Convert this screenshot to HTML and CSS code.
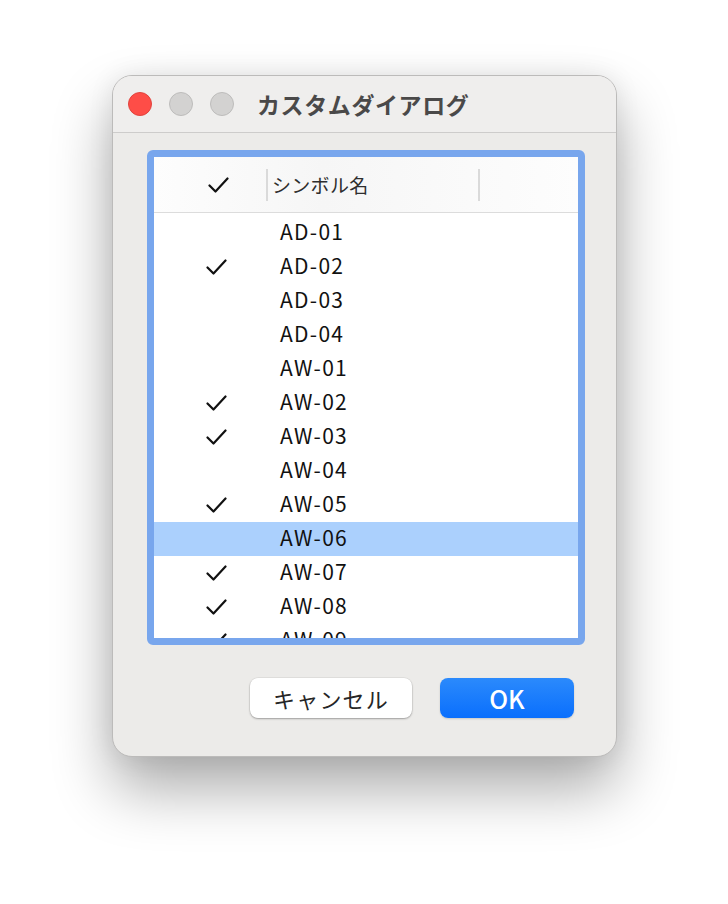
FILE: index.html
```html
<!DOCTYPE html>
<html lang="ja">
<head>
    <meta charset="UTF-8">
    <meta name="viewport" content="width=device-width, initial-scale=1.0">
    <title>カスタムダイアログ</title>
    <link rel="stylesheet" href="styles.css">
</head>
<body>
    <div class="window">
        <div class="titlebar">
            <div class="lights">
                <span class="light close"></span>
                <span class="light"></span>
                <span class="light"></span>
            </div>
            <div class="title">カスタムダイアログ</div>
        </div>
        <div class="content">
            <div class="table">
                <div class="table-inner">
                    <div class="table-header">
                        <div class="head-check">
                            <svg class="check" viewBox="0 0 21 16"><path d="M1.5 8.5 L7.5 14.5 L19.5 1.5"/></svg>
                        </div>
                        <div class="head-name">シンボル名</div>
                        <div class="head-rest"></div>
                    </div>
                    <div class="rows" id="rows"></div>
                </div>
            </div>
            <div class="buttons">
                <button class="btn cancel">キャンセル</button>
                <button class="btn ok">OK</button>
            </div>
        </div>
    </div>

    <script>
        // Symbol list: name and checked state
        const symbols = [
            ["AD-01", false], ["AD-02", true], ["AD-03", false], ["AD-04", false],
            ["AW-01", false], ["AW-02", true], ["AW-03", true], ["AW-04", false],
            ["AW-05", true], ["AW-06", false], ["AW-07", true], ["AW-08", true],
            ["AW-09", true]
        ];
        const selected = "AW-06";
        const checkSvg = '<svg class="check" viewBox="0 0 21 16"><path d="M1.5 8.5 L7.5 14.5 L19.5 1.5"/></svg>';

        const rows = document.getElementById("rows");
        symbols.forEach(function(item) {
            const row = document.createElement("div");
            row.className = "row" + (item[0] === selected ? " selected" : "");
            row.innerHTML = '<div class="cell-check">' + (item[1] ? checkSvg : '') + '</div>' +
                '<div class="cell-name">' + item[0] + '</div>';
            rows.appendChild(row);
        });
    </script>
</body>
</html>
```

FILE: styles.css
```css
body {
    margin: 0;
    height: 904px;
    background-color: #ffffff;
    font-family: "Noto Sans CJK JP", "Noto Sans", sans-serif;
    overflow: hidden;
}
.window {
    width: 503px;
    margin: 75px 0 0 112px;
    background-color: #ecebe9;
    border: 1px solid #bcbbba;
    border-radius: 20px;
    box-shadow: 0 32px 60px rgba(0, 0, 0, 0.33), 0 0 26px rgba(0, 0, 0, 0.08);
    overflow: hidden;
}
.titlebar {
    height: 56px;
    display: flex;
    align-items: center;
    background-color: #efeeed;
    border-bottom: 1px solid #cdcccb;
}
.lights {
    display: flex;
    gap: 17px;
    padding-left: 15px;
}
.light {
    width: 22px;
    height: 22px;
    border-radius: 50%;
    background-color: #d3d2d1;
    border: 0.5px solid #bdbcbb;
}
.light.close {
    background-color: #fe4d47;
    border-color: #e0443e;
}
.title {
    margin-left: 23px;
    font-size: 23px;
    font-weight: bold;
    color: #4a4949;
    letter-spacing: 0.6px;
}
.content {
    padding: 17px 31px 38px 34px;
}
.table {
    width: 424px;
    height: 481px;
    border: 7px solid #78a6ed;
    border-radius: 6px;
    background-color: #ffffff;
}
.table-inner {
    height: 100%;
    overflow: hidden;
}
.table-header {
    display: grid;
    grid-template-columns: 112px 212px 1fr;
    align-items: center;
    height: 55px;
    border-bottom: 1px solid #dcdcdc;
    background: linear-gradient(90deg, #fdfdfd, #f6f6f6 40%, #fdfdfd);
}
.head-check {
    padding-left: 54px;
    display: flex;
}
.head-name,
.head-rest {
    height: 32px;
    border-left: 2px solid #dadada;
    display: flex;
    align-items: center;
}
.head-name {
    padding-left: 4px;
    font-size: 19px;
    color: #2e2e2e;
    letter-spacing: 0.3px;
}
.rows {
    padding-top: 3px;
}
.row {
    display: grid;
    grid-template-columns: 126px 1fr;
    align-items: center;
    height: 34px;
}
.row.selected {
    background-color: #abd0fd;
}
.cell-check {
    padding-left: 52px;
    display: flex;
}
.cell-name {
    font-size: 21px;
    line-height: 28px;
    padding-bottom: 4px;
    color: #111111;
    letter-spacing: 1.3px;
}
.check {
    width: 21px;
    height: 16px;
    fill: none;
    stroke: #111111;
    stroke-width: 2.2;
    stroke-linecap: round;
    stroke-linejoin: round;
}
.buttons {
    display: flex;
    justify-content: flex-end;
    gap: 28px;
    margin-top: 33px;
    padding-right: 11px;
}
.btn {
    height: 40px;
    border-radius: 8px;
    border: none;
    font-family: "Noto Sans CJK JP", "Noto Sans", sans-serif;
    padding: 0;
}
.cancel {
    width: 162px;
    background-color: #ffffff;
    color: #262626;
    font-size: 22px;
    letter-spacing: 1.2px;
    box-shadow: 0 1px 2px rgba(0, 0, 0, 0.3), 0 0 0 0.5px rgba(0, 0, 0, 0.08);
}
.ok {
    width: 134px;
    background: linear-gradient(#2b8afc, #0a6ffd);
    color: #ffffff;
    font-size: 25px;
    font-weight: 500;
    box-shadow: 0 1px 2px rgba(0, 0, 0, 0.15);
}
```
